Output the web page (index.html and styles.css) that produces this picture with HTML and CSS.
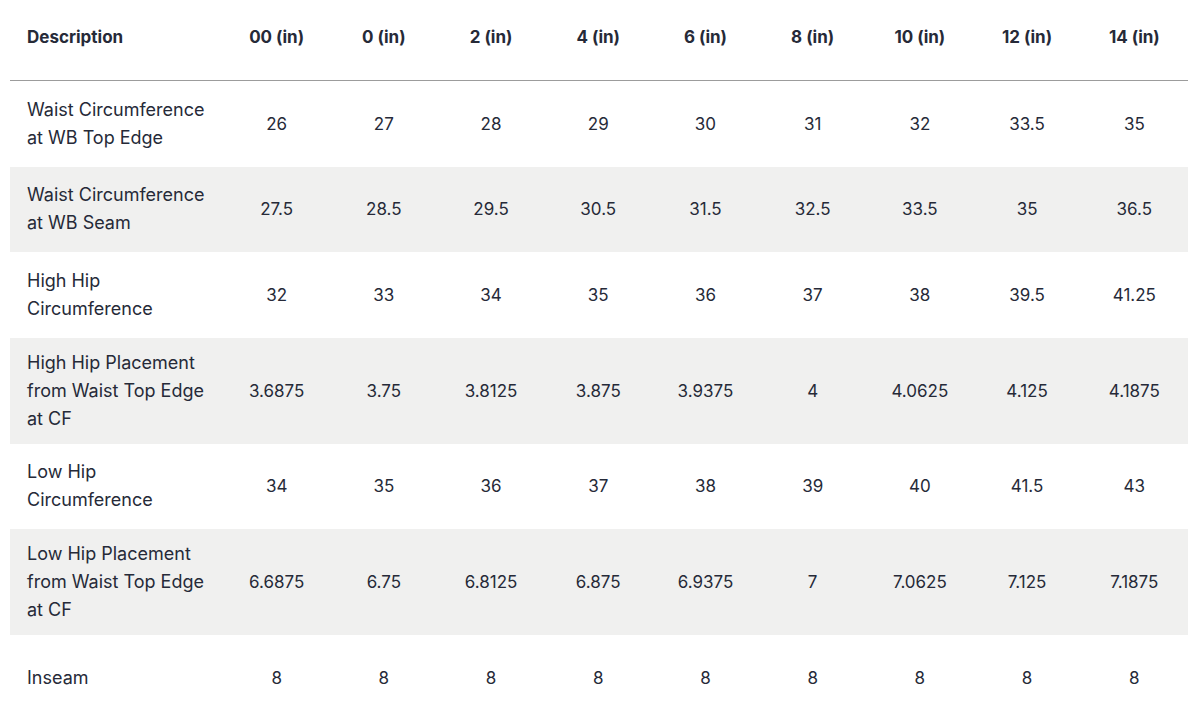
FILE: index.html
```html
<!DOCTYPE html>
<html lang="en">
<head>
<meta charset="utf-8">
<title>Size Chart</title>
<link rel="stylesheet" href="styles.css">
</head>
<body>
<div class="wrap">
<table class="size-table">
  <thead>
    <tr>
      <th class="desc">Description</th>
      <th>00 (in)</th><th>0 (in)</th><th>2 (in)</th><th>4 (in)</th><th>6 (in)</th><th>8 (in)</th><th>10 (in)</th><th>12 (in)</th><th>14 (in)</th>
    </tr>
  </thead>
  <tbody>
    <tr>
      <td class="desc">Waist Circumference<br>at WB Top Edge</td>
      <td>26</td><td>27</td><td>28</td><td>29</td><td>30</td><td>31</td><td>32</td><td>33.5</td><td>35</td>
    </tr>
    <tr class="alt">
      <td class="desc">Waist Circumference<br>at WB Seam</td>
      <td>27.5</td><td>28.5</td><td>29.5</td><td>30.5</td><td>31.5</td><td>32.5</td><td>33.5</td><td>35</td><td>36.5</td>
    </tr>
    <tr>
      <td class="desc">High Hip<br>Circumference</td>
      <td>32</td><td>33</td><td>34</td><td>35</td><td>36</td><td>37</td><td>38</td><td>39.5</td><td>41.25</td>
    </tr>
    <tr class="alt">
      <td class="desc">High Hip Placement<br>from Waist Top Edge<br>at CF</td>
      <td>3.6875</td><td>3.75</td><td>3.8125</td><td>3.875</td><td>3.9375</td><td>4</td><td>4.0625</td><td>4.125</td><td>4.1875</td>
    </tr>
    <tr>
      <td class="desc">Low Hip<br>Circumference</td>
      <td>34</td><td>35</td><td>36</td><td>37</td><td>38</td><td>39</td><td>40</td><td>41.5</td><td>43</td>
    </tr>
    <tr class="alt">
      <td class="desc">Low Hip Placement<br>from Waist Top Edge<br>at CF</td>
      <td>6.6875</td><td>6.75</td><td>6.8125</td><td>6.875</td><td>6.9375</td><td>7</td><td>7.0625</td><td>7.125</td><td>7.1875</td>
    </tr>
    <tr>
      <td class="desc">Inseam</td>
      <td>8</td><td>8</td><td>8</td><td>8</td><td>8</td><td>8</td><td>8</td><td>8</td><td>8</td>
    </tr>
  </tbody>
</table>
</div>
</body>
</html>
```

FILE: styles.css
```css
html, body {
  margin: 0;
  padding: 0;
  background: #ffffff;
}
body {
  font-family: "Inter", "Liberation Sans", sans-serif;
  color: #262a38;
  overflow: hidden;
}
.wrap {
  padding-left: 10px;
  width: 1178px;
}
.size-table {
  width: 1178px;
  border-collapse: collapse;
  table-layout: fixed;
  font-size: 17px;
  line-height: 28px;
}
.size-table th,
.size-table td {
  text-align: center;
  vertical-align: middle;
  padding: 11px 0;
  width: 107.2px;
}
.size-table th.desc,
.size-table td.desc {
  text-align: left;
  padding-left: 17px;
  width: 196px;
}
.size-table td.desc {
  font-size: 18px;
}
.size-table thead th {
  font-weight: 700;
  height: 58px;
  padding-top: 8px;
  padding-bottom: 14px;
  border-bottom: 1px solid #9c9c9c;
}
.size-table tbody td {
  height: 63.5px;
  font-weight: 400;
}
.size-table tr.alt td {
  background: #f0f0ef;
}
```
